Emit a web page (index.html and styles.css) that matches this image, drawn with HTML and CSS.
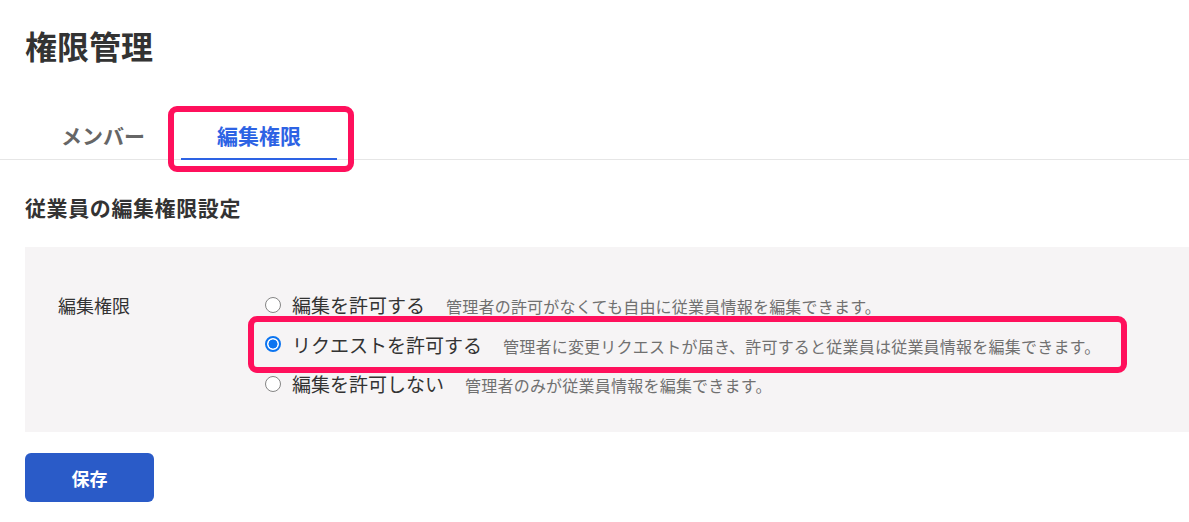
FILE: index.html
```html
<!DOCTYPE html>
<html lang="ja">
<head>
<meta charset="utf-8">
<title>権限管理</title>
<link rel="stylesheet" href="styles.css">
</head>
<body>
<h1 class="page-title">権限管理</h1>
<nav class="tabs">
  <div class="tab">メンバー</div>
  <div class="tab tab-active callout callout-tab">編集権限</div>
</nav>
<main class="content">
  <h2 class="section-title">従業員の編集権限設定</h2>
  <section class="panel">
    <div class="field-label">編集権限</div>
    <div class="options">
      <label class="option">
        <input class="radio" type="radio" name="perm">
        <span class="opt-text"><span class="opt-label">編集を許可する</span><span class="opt-desc">管理者の許可がなくても自由に従業員情報を編集できます。</span></span>
      </label>
      <label class="option callout callout-row">
        <input class="radio" type="radio" name="perm" checked>
        <span class="opt-text"><span class="opt-label">リクエストを許可する</span><span class="opt-desc">管理者に変更リクエストが届き、許可すると従業員は従業員情報を編集できます。</span></span>
      </label>
      <label class="option">
        <input class="radio" type="radio" name="perm">
        <span class="opt-text"><span class="opt-label">編集を許可しない</span><span class="opt-desc">管理者のみが従業員情報を編集できます。</span></span>
      </label>
    </div>
  </section>
  <button class="save" type="button">保存</button>
</main>
</body>
</html>
```

FILE: styles.css
```css
html, body {
  margin: 0;
  background: #ffffff;
}

body {
  padding-top: 23px;
  font-family: "Noto Sans CJK JP", "Noto Sans", sans-serif;
  color: #333333;
}

.page-title {
  margin: 0 0 0 25px;
  font-size: 32px;
  line-height: 44px;
  font-weight: 700;
  color: #333333;
}

.tabs {
  display: flex;
  margin-top: 45px;
  padding-left: 25px;
  height: 47px;
  border-bottom: 1px solid #e6e6e6;
}

.tab {
  box-sizing: border-box;
  width: 156px;
  height: 48px;
  margin-bottom: -1px;
  text-align: center;
  line-height: 46px;
  font-size: 21px;
  font-weight: 700;
  color: #666666;
  border-bottom: 2px solid transparent;
}

.tab-active {
  color: #2d63e4;
  border-bottom-color: #2d63e4;
}

.callout {
  position: relative;
}

.callout::after {
  content: "";
  position: absolute;
  border: 6px solid #ff105c;
  border-radius: 9px;
  pointer-events: none;
}

.callout-tab::after {
  left: -13px;
  right: -17px;
  top: -6px;
  bottom: -14px;
}

.callout-row::after {
  left: -18px;
  right: -27px;
  top: -8.5px;
  bottom: -9px;
}

.content {
  padding-left: 25px;
}

.section-title {
  margin: 32px 0 25px;
  font-size: 21px;
  line-height: 30px;
  font-weight: 700;
  letter-spacing: 0.6px;
  color: #333333;
}

.panel {
  display: grid;
  grid-template-columns: 208px 1fr;
  padding: 38px 0 28.5px 33px;
  background: #f6f4f5;
}

.field-label {
  font-size: 18px;
  line-height: 40px;
  color: #333333;
}

.options {
  display: flex;
  flex-direction: column;
  align-items: flex-start;
}

.option {
  display: flex;
  align-items: center;
  height: 39.5px;
}

.radio {
  appearance: none;
  -webkit-appearance: none;
  box-sizing: border-box;
  width: 16px;
  height: 16px;
  margin: 0 11px 0 -1px;
  flex: none;
  border: 1.8px solid #858585;
  border-radius: 50%;
  background: #ffffff;
}

.radio:checked {
  border: 2px solid #0b74f0;
  background: radial-gradient(circle, #0b74f0 0 4.2px, #ffffff 4.8px);
}

.opt-text {
  white-space: nowrap;
}

.opt-label {
  font-size: 19px;
  color: #333333;
  margin-right: 21px;
}

.opt-desc {
  font-size: 16px;
  letter-spacing: 0.22px;
  color: #707070;
}

.save {
  display: block;
  margin-top: 21px;
  width: 129px;
  height: 49px;
  border: none;
  border-radius: 6px;
  background: #2a5bc8;
  color: #ffffff;
  font-family: inherit;
  font-size: 18px;
  font-weight: 700;
}
```
